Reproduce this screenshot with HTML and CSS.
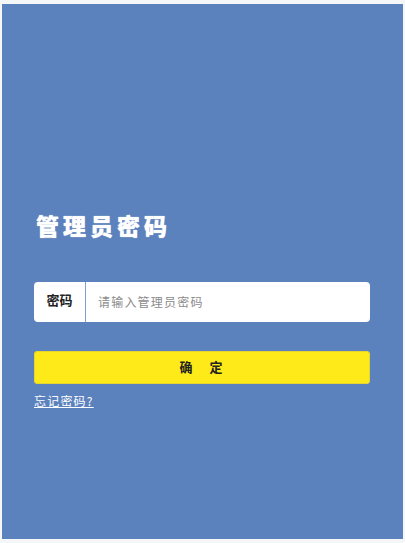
FILE: index.html
```html
<!DOCTYPE html>
<html lang="zh-CN">
<head>
  <meta charset="UTF-8">
  <title>管理员密码</title>
  <link rel="stylesheet" href="styles.css">
</head>
<body>
  <div class="panel">
    <h1 class="title">管理员密码</h1>
    <div class="field">
      <label class="field-label">密码</label>
      <input class="field-input" type="password" placeholder="请输入管理员密码">
    </div>
    <button class="submit">确<span class="submit-gap"></span>定</button>
    <a class="forgot" href="#">忘记密码?</a>
  </div>
</body>
</html>
```

FILE: styles.css
```css
html, body {
  height: 100%;
}
body {
  margin: 0;
  padding: 4px 2px;
  box-sizing: border-box;
  background: #f4f6f8;
  font-family: "Noto Sans CJK SC", "Liberation Sans", sans-serif;
}
.panel {
  height: 100%;
  padding: 206px 33px 0 32px;
  box-sizing: border-box;
  background: #5b82bd;
  display: flex;
  flex-direction: column;
  align-items: stretch;
}
.title {
  margin: 0 0 41px 2px;
  font-size: 23px;
  line-height: 31px;
  font-weight: 900;
  letter-spacing: 4px;
  color: #fff;
  text-shadow: 0 0 1px #fff;
}
.field {
  height: 40px;
  display: flex;
  align-items: stretch;
  background: #fff;
  border-radius: 4px;
}
.field-label {
  width: 51px;
  flex-shrink: 0;
  padding-bottom: 5px;
  box-sizing: content-box;
  border-right: 1px solid #7f9fcc;
  display: flex;
  align-items: center;
  justify-content: center;
  font-size: 13px;
  font-weight: 700;
  color: #222;
}
.field-input {
  flex: 1;
  min-width: 0;
  border: 0;
  outline: 0;
  padding: 0 12px 2px;
  background: transparent;
  font-family: inherit;
  font-size: 12px;
  letter-spacing: 1.2px;
  border-radius: 0 4px 4px 0;
}
.field-input::placeholder {
  color: #8b8b8b;
}
.submit {
  height: 33px;
  margin-top: 29px;
  padding: 0 2px 3px 0;
  border: 0;
  border-radius: 4px;
  background: #fdea18;
  box-shadow: inset 0 0 0 1px #e6d52c;
  font-family: inherit;
  font-size: 13px;
  font-weight: 700;
  color: #222;
}
.submit-gap {
  display: inline-block;
  width: 17px;
}
.forgot {
  align-self: flex-start;
  margin-top: 8px;
  font-size: 12px;
  line-height: 18px;
  letter-spacing: 1.2px;
  color: #fff;
}
```
